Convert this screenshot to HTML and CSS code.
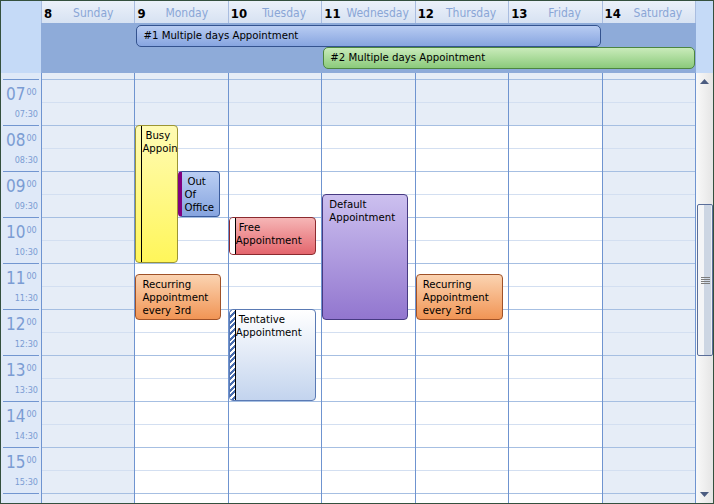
FILE: index.html
```html
<!DOCTYPE html>
<html>
<head>
<meta charset="utf-8">
<title>Calendar week</title>
<link rel="stylesheet" href="styles.css">
</head>
<body>
<div class="cal">
  <div class="top">
    <div class="corner"></div>
    <div class="top-main">
      <div class="heads">
        <div class="head"><b>8</b><span>Sunday</span></div>
        <div class="head"><b>9</b><span>Monday</span></div>
        <div class="head"><b>10</b><span>Tuesday</span></div>
        <div class="head"><b>11</b><span>Wednesday</span></div>
        <div class="head"><b>12</b><span>Thursday</span></div>
        <div class="head"><b>13</b><span>Friday</span></div>
        <div class="head"><b>14</b><span>Saturday</span></div>
      </div>
      <div class="allday">
        <div class="ad ad1">#1 Multiple days Appointment</div>
        <div class="ad ad2">#2 Multiple days Appointment</div>
      </div>
    </div>
    <div class="corner"></div>
  </div>
  <div class="body">
    <div class="times">
      <div class="times-inner">
        <div class="hour"><div class="h-main"><span class="h-num">07</span><span class="h-min">00</span></div><div class="h-half">07:30</div></div>
        <div class="hour"><div class="h-main"><span class="h-num">08</span><span class="h-min">00</span></div><div class="h-half">08:30</div></div>
        <div class="hour"><div class="h-main"><span class="h-num">09</span><span class="h-min">00</span></div><div class="h-half">09:30</div></div>
        <div class="hour"><div class="h-main"><span class="h-num">10</span><span class="h-min">00</span></div><div class="h-half">10:30</div></div>
        <div class="hour"><div class="h-main"><span class="h-num">11</span><span class="h-min">00</span></div><div class="h-half">11:30</div></div>
        <div class="hour"><div class="h-main"><span class="h-num">12</span><span class="h-min">00</span></div><div class="h-half">12:30</div></div>
        <div class="hour"><div class="h-main"><span class="h-num">13</span><span class="h-min">00</span></div><div class="h-half">13:30</div></div>
        <div class="hour"><div class="h-main"><span class="h-num">14</span><span class="h-min">00</span></div><div class="h-half">14:30</div></div>
        <div class="hour"><div class="h-main"><span class="h-num">15</span><span class="h-min">00</span></div><div class="h-half">15:30</div></div>
        <div class="hour hour-end"></div>
      </div>
    </div>
    <div class="days">
      <div class="day"><div class="day-inner"></div></div>
      <div class="day"><div class="day-inner work">
        <div class="appt busy">Busy Appointment</div>
        <div class="appt ooo">Out Of Office</div>
        <div class="appt recurring rec-mon">Recurring Appointment every 3rd</div>
      </div></div>
      <div class="day"><div class="day-inner work">
        <div class="appt free">Free Appointment</div>
        <div class="appt tentative">Tentative Appointment</div>
      </div></div>
      <div class="day"><div class="day-inner work">
        <div class="appt default">Default Appointment</div>
      </div></div>
      <div class="day"><div class="day-inner work">
        <div class="appt recurring rec-thu">Recurring Appointment every 3rd</div>
      </div></div>
      <div class="day"><div class="day-inner work"></div></div>
      <div class="day"><div class="day-inner"></div></div>
    </div>
    <div class="scroll">
      <div class="sb-btn"><svg width="9" height="5" viewBox="0 0 9 5"><polygon points="0,5 4.5,0 9,5" fill="#4b5c80"/></svg></div>
      <div class="sb-track"><div class="sb-thumb"><div class="grip"></div></div></div>
      <div class="sb-btn"><svg width="9" height="5" viewBox="0 0 9 5"><polygon points="0,0 9,0 4.5,5" fill="#4b5c80"/></svg></div>
    </div>
  </div>
</div>
</body>
</html>
```

FILE: styles.css
```css
* { box-sizing: border-box; }

body {
  margin: 0;
  font-family: "DejaVu Sans Condensed", "DejaVu Sans", sans-serif;
  font-stretch: condensed;
  font-size: 11px;
  color: #000;
}

.cal {
  width: 714px;
  height: 504px;
  border: 1px solid #34503e;
  display: flex;
  flex-direction: column;
  background: #fff;
}

/* ---------- top: day headers + all-day area ---------- */
.top {
  flex: none;
  height: 72px;
  display: grid;
  grid-template-columns: 40px 655px 17px;
}

.corner { background: #c5daf7; }

.top-main {
  display: flex;
  flex-direction: column;
}

.heads {
  height: 22px;
  display: grid;
  grid-template-columns: repeat(7, 1fr);
  border-right: 1px solid #a9bde0;
  background: linear-gradient(to bottom, #ebf1fa, #d7e2f2);
}

.head {
  border-left: 1px solid #a9bde0;
  display: flex;
  align-items: center;
  padding-top: 2px;
  white-space: nowrap;
  overflow: hidden;
}

.head b {
  font-size: 13px;
  padding-left: 2px;
}

.head span {
  flex: 1;
  text-align: center;
  font-size: 12px;
  color: #8aa6d6;
}

.allday {
  flex: 1;
  background: #8eabd9;
  display: grid;
  grid-template-columns: repeat(7, 1fr);
  grid-template-rows: 22px 22px;
  align-content: start;
  padding: 2px 1px 0 0;
}

.ad {
  border: 1px solid;
  border-radius: 5px;
  padding-left: 6px;
  font-size: 11.3px;
  line-height: 20px;
  white-space: nowrap;
  overflow: hidden;
}

.ad1 {
  grid-column: 2 / 7;
  grid-row: 1;
  margin: 0 1px 0 2px;
  background: linear-gradient(to bottom, #b8ccf2, #87a5e0);
  border-color: #34538f;
}

.ad2 {
  grid-column: 4 / 8;
  grid-row: 2;
  margin-left: 2px;
  background: linear-gradient(to bottom, #c9ebba, #8bca7b);
  border-color: #4c8540;
}

/* ---------- body: time ruler + day columns + scrollbar ---------- */
.body {
  flex: 1;
  min-height: 0;
  display: grid;
  grid-template-columns: 40px 655px 17px;
  overflow: hidden;
}

.times {
  background: #dfe9f8;
  overflow: hidden;
}

.times-inner { margin-top: 6px; }

.hour {
  height: 46px;
  margin: 0 2px;
  border-top: 1px solid #7296d0;
  color: #7b9cd3;
}

.hour-end { height: 10px; }

.h-main {
  height: 22px;
  display: flex;
  align-items: flex-start;
  padding: 6px 0 0 3px;
}

.h-num {
  font-size: 17px;
  line-height: 17px;
}

.h-min {
  font-size: 9px;
  line-height: 9px;
  margin: 2px 0 0 1px;
}

.h-half {
  text-align: right;
  font-size: 9px;
  line-height: 11px;
  padding: 7px 1px 0 0;
}

.days {
  display: grid;
  grid-template-columns: repeat(7, 1fr);
  border-right: 1px solid #6f94d0;
  overflow: hidden;
}

.day {
  border-left: 1px solid #6f94d0;
  min-width: 0;
}

.day-inner {
  position: relative;
  height: 506px;
  margin-top: -40px;
  background-color: #e6edf7;
  background-image: repeating-linear-gradient(to bottom,
    #a6bfe2 0 1px, transparent 1px 23px,
    #d3dff1 23px 24px, transparent 24px 46px);
}

.day-inner.work {
  background-image:
    repeating-linear-gradient(to bottom,
      #a6bfe2 0 1px, transparent 1px 23px,
      #d3dff1 23px 24px, transparent 24px 46px),
    linear-gradient(to bottom, #e6edf7 0 92px, #ffffff 92px);
}

/* ---------- appointments ---------- */
.appt {
  position: absolute;
  border: 1px solid;
  border-radius: 4px;
  overflow: hidden;
  padding: 3px 2px 0 6px;
  font-size: 11.3px;
  line-height: 13px;
}

.appt.busy,
.appt.free,
.appt.tentative { text-indent: 3px; }

.appt.busy::before,
.appt.free::before,
.appt.tentative::before {
  content: "";
  position: absolute;
  left: 0;
  top: 0;
  bottom: 0;
  width: 5px;
  border-right: 1px solid;
}

.busy {
  top: 92px; left: 0; width: 43px; height: 138px;
  background: linear-gradient(to bottom, #fffbb4, #fff65a);
  border-color: #9c9533;
}
.busy::before { border-color: #9c9533; }

.ooo {
  top: 138px; left: 43px; width: 42px; height: 46px;
  border-left: 4px solid #800080;
  padding-left: 2px;
  text-indent: 3px;
  background: linear-gradient(to bottom, #bacef3, #86a4df);
  border-color: #3a5b9c #3a5b9c #3a5b9c #800080;
}

.free {
  top: 184px; left: 0; width: 87px; height: 38px;
  background: linear-gradient(to bottom, #f6b6b6, #e4666d);
  border-color: #8c2b2f;
}
.free::before { background: #fff; border-color: #8c2b2f; }

.tentative {
  top: 276px; left: 0; width: 87px; height: 92px;
  background: linear-gradient(to bottom, #ffffff, #c3d4ee);
  border-color: #5a7ab4;
}
.tentative::before {
  background: repeating-linear-gradient(135deg, #4a6dae 0 2px, #ffffff 2px 4px);
  border-color: #5a7ab4;
}

.default {
  top: 161px; left: 0; width: 86px; height: 126px;
  background: linear-gradient(to bottom, #ccc0ef, #9276cf);
  border-color: #473a82;
}

.recurring {
  top: 241px; left: 0; height: 46px;
  background: linear-gradient(to bottom, #fbd3b1, #f19555);
  border-color: #a05228;
}
.rec-mon { width: 86px; }
.rec-thu { width: 87px; }

/* ---------- scrollbar ---------- */
.scroll {
  display: flex;
  flex-direction: column;
  background: linear-gradient(to right, #f9f9f9, #e5e5e5);
}

.sb-btn {
  height: 17px;
  flex: none;
  display: flex;
  align-items: center;
  justify-content: center;
}

.sb-btn svg { display: block; }

.sb-track { flex: 1; }

.sb-thumb {
  margin: 114px 0 0 1px;
  height: 152px;
  border: 1px solid #5a6e99;
  border-radius: 2px;
  background: linear-gradient(to right, #f4f5f7 0 45%, #cdd6e3 45% 90%, #eceff3 90%);
  display: flex;
  align-items: center;
  justify-content: center;
}

.grip {
  width: 9px;
  height: 7px;
  background: repeating-linear-gradient(to bottom, #7c7c7c 0 1px, transparent 1px 2px);
}
```
